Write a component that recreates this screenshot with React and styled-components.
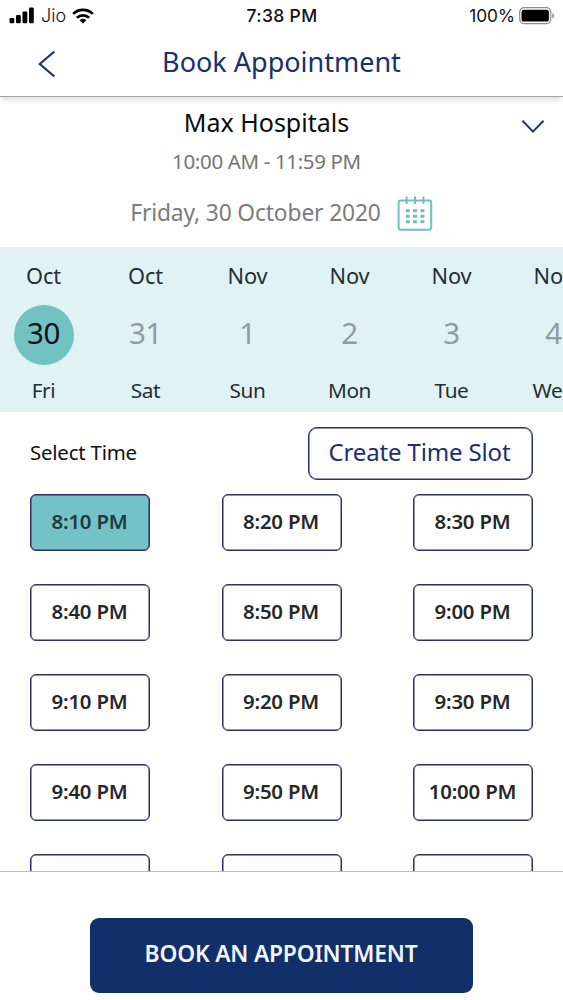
import React, { useState } from 'react';
import styled, { createGlobalStyle } from 'styled-components';

const days = [
    { month: 'Oct', date: 30, day: 'Fri' },
    { month: 'Oct', date: 31, day: 'Sat' },
    { month: 'Nov', date: 1, day: 'Sun' },
    { month: 'Nov', date: 2, day: 'Mon' },
    { month: 'Nov', date: 3, day: 'Tue' },
    { month: 'Nov', date: 4, day: 'Wed' },
];

const slots = [
    '8:10 PM', '8:20 PM', '8:30 PM',
    '8:40 PM', '8:50 PM', '9:00 PM',
    '9:10 PM', '9:20 PM', '9:30 PM',
    '9:40 PM', '9:50 PM', '10:00 PM',
    '10:10 PM', '10:20 PM', '10:30 PM',
];

function StatusBar() {
    return (
        <Status>
            <Carrier>
                <svg width="26" height="17" viewBox="0 0 26 17">
                    <rect x="0.5" y="11" width="4.8" height="5.3" rx="1.2" />
                    <rect x="7" y="8" width="4.8" height="8.3" rx="1.2" />
                    <rect x="13.5" y="4.5" width="4.8" height="11.8" rx="1.2" />
                    <rect x="20" y="0.6" width="4.8" height="15.7" rx="1.2" />
                </svg>
                <CarrierName>Jio</CarrierName>
                <svg width="22" height="16" viewBox="0 0 22 16">
                    <g fill="none" stroke="#000" strokeWidth="2.7">
                        <path d="M1.2 5.9a14 14 0 0 1 19.6 0" />
                        <path d="M4.9 9.8a8.7 8.7 0 0 1 12.2 0" />
                    </g>
                    <path d="M7.6 12.2a4.9 4.9 0 0 1 6.8 0L11 15.6z" />
                </svg>
            </Carrier>
            <Clock>7:38 PM</Clock>
            <Battery>
                100%
                <svg width="36" height="18" viewBox="0 0 36 18">
                    <rect x="0.7" y="0.7" width="31" height="16" rx="4.4" fill="none" stroke="#8d8d8d" strokeWidth="1.2" />
                    <rect x="2.5" y="2.8" width="27.4" height="11.8" rx="2.2" />
                    <path d="M33.4 6v5.6c1.1-.5 1.8-1.6 1.8-2.8s-.7-2.3-1.8-2.8z" fill="#8d8d8d" />
                </svg>
            </Battery>
        </Status>
    );
}

function CalendarIcon() {
    return (
        <svg width="36" height="36" viewBox="0 0 36 36" fill="none" stroke="#72bfc0">
            <rect x="1.6" y="4.4" width="32.6" height="29.4" rx="2" strokeWidth="2" />
            <path d="M9.6 0.5v7.6M18 0.5v7.6M26.4 0.5v7.6" strokeWidth="2" />
            <path d="M8.8 14.7h18.6M8.8 20.2h18.6M8.8 25.7h18.6" strokeWidth="3" strokeDasharray="4 3.3" />
        </svg>
    );
}

export default function App() {
    const [activeDay, setActiveDay] = useState(0);
    const [activeSlot, setActiveSlot] = useState(0);

    return (
        <Screen>
            <GlobalStyle />
            <StatusBar />
            <Header>
                <BackButton aria-label="Back">
                    <svg width="18" height="28" viewBox="0 0 18 28" fill="none" stroke="#1d3474" strokeWidth="2.2">
                        <path d="M16.4 1.5L1.8 14L16.4 26.5" />
                    </svg>
                </BackButton>
                <Title>Book Appointment</Title>
            </Header>
            <Hospital>
                <HospitalName>Max Hospitals</HospitalName>
                <Hours>10:00 AM - 11:59 PM</Hours>
                <Expand aria-label="Change hospital">
                    <svg width="24" height="15" viewBox="0 0 24 15" fill="none" stroke="#1d3474" strokeWidth="2">
                        <path d="M1.5 1.8L12 12.6L22.5 1.8" />
                    </svg>
                </Expand>
            </Hospital>
            <DateRow>
                <DateText>Friday, 30 October 2020</DateText>
                <CalendarIcon />
            </DateRow>
            <DayStrip>
                {days.map((d, i) => (
                    <Day key={d.date} onClick={() => setActiveDay(i)}>
                        <Month>{d.month}</Month>
                        <DateCircle $active={i === activeDay}>{d.date}</DateCircle>
                        <Weekday>{d.day}</Weekday>
                    </Day>
                ))}
            </DayStrip>
            <TimeSection>
                <TimeHeader>
                    <Label>Select Time</Label>
                    <CreateButton>Create Time Slot</CreateButton>
                </TimeHeader>
                <SlotGrid>
                    {slots.map((slot, i) => (
                        <Slot key={slot} $active={i === activeSlot} onClick={() => setActiveSlot(i)}>
                            {slot}
                        </Slot>
                    ))}
                </SlotGrid>
            </TimeSection>
            <Footer>
                <BookButton>BOOK AN APPOINTMENT</BookButton>
            </Footer>
        </Screen>
    );
}

const GlobalStyle = createGlobalStyle`
    * {
        box-sizing: border-box;
    }
    body {
        margin: 0;
        background: #fefefe;
    }
    button {
        margin: 0;
        padding: 0;
        border: 0;
        background: none;
        font-family: inherit;
        cursor: pointer;
    }
    svg {
        display: block;
        flex-shrink: 0;
    }
`;

const Screen = styled.div`
    display: flex;
    flex-direction: column;
    width: 563px;
    height: 1000px;
    overflow: hidden;
    background: #fefefe;
    color: #111;
    font-family: 'Noto Sans', 'Open Sans', sans-serif;
    white-space: nowrap;
`;

const Status = styled.div`
    display: grid;
    grid-template-columns: 1fr auto 1fr;
    align-items: center;
    flex-shrink: 0;
    height: 31px;
    padding: 0 8px 0 9px;
    font-family: Inter, 'Liberation Sans', sans-serif;
    font-size: 17px;
    color: #111;
`;

const Carrier = styled.div`
    display: flex;
    align-items: center;
`;

const CarrierName = styled.span`
    margin: 0 6px 0 6px;
    font-weight: 300;
    font-size: 18px;
`;

const Clock = styled.div`
    font-weight: 500;
    font-size: 17.5px;
    letter-spacing: 0.35px;
`;

const Battery = styled.div`
    display: flex;
    align-items: center;
    justify-content: flex-end;
    gap: 4px;
    font-size: 17.3px;
`;

const Header = styled.header`
    display: grid;
    grid-template-columns: 94px 1fr 94px;
    align-items: center;
    flex-shrink: 0;
    height: 66px;
    border-bottom: 1px solid #a3a5aa;
    box-shadow: 0 5px 5px -2px rgba(40, 60, 80, 0.16);
`;

const BackButton = styled.button`
    justify-self: center;
    margin-right: 1px;
`;

const Title = styled.h1`
    margin: 0;
    padding-bottom: 3px;
    text-align: center;
    font-size: 27px;
    line-height: 36px;
    font-weight: 400;
    color: #1b2f6d;
`;

const Hospital = styled.section`
    display: grid;
    grid-template-columns: 502px 24px;
    flex-shrink: 0;
    padding: 8px 0 0 15px;
    text-align: center;
`;

const HospitalName = styled.h2`
    margin: 0 0 0 15px;
    padding-right: 14px;
    line-height: 35px;
    font-size: 25px;
    font-weight: 400;
    color: #0c0c0c;
`;

const Hours = styled.div`
    grid-row: 2;
    margin-top: 8px;
    padding-left: 1px;
    line-height: 27px;
    font-size: 20.5px;
    letter-spacing: -0.35px;
    color: #757575;
`;

const Expand = styled.button`
    grid-column: 2;
    grid-row: 1;
    align-self: center;
    margin: 7px 0 0 4px;
`;

const DateRow = styled.div`
    display: flex;
    align-items: center;
    justify-content: center;
    gap: 16px;
    flex-shrink: 0;
    height: 72px;
    padding-top: 6px;
`;

const DateText = styled.span`
    padding-bottom: 3px;
    font-size: 22.8px;
    letter-spacing: -0.15px;
    color: #7c7c7c;
`;

const DayStrip = styled.div`
    display: flex;
    flex-shrink: 0;
    height: 165px;
    padding-top: 14px;
    overflow: hidden;
    background: #e1f2f4;
`;

const Day = styled.div`
    display: flex;
    flex-direction: column;
    align-items: center;
    flex: 0 0 102px;
    color: #252f33;

    &:first-child {
        margin-left: -7.5px;
    }
`;

const Month = styled.span`
    line-height: 30px;
    font-size: 21.8px;
    letter-spacing: -0.1px;
`;

const DateCircle = styled.span`
    width: 60px;
    height: 60px;
    margin: 14px 0 12px;
    border-radius: 50%;
    line-height: 55px;
    text-align: center;
    font-size: 29.5px;
    letter-spacing: -0.3px;
    background: ${({ $active }) => ($active ? '#73c2c3' : 'transparent')};
    color: ${({ $active }) => ($active ? '#071318' : '#929b9e')};
`;

const Weekday = styled.span`
    line-height: 26px;
    font-size: 20.8px;
    letter-spacing: -0.4px;
`;

const TimeSection = styled.section`
    flex: 1;
    min-height: 0;
    overflow: hidden;
    padding: 15px 30px 0;
`;

const TimeHeader = styled.div`
    display: flex;
    align-items: center;
    justify-content: space-between;
    height: 53px;
`;

const Label = styled.span`
    padding-bottom: 4px;
    font-size: 20.4px;
    letter-spacing: -0.2px;
`;

const CreateButton = styled.button`
    width: 225px;
    height: 53px;
    padding: 0 2px 4px 0;
    border: 1px solid #302d66;
    border-radius: 9px;
    box-shadow: inset 0 0 0 0.5px #302d66;
    font-size: 24px;
    letter-spacing: -0.15px;
    color: #1b2f6d;
`;

const SlotGrid = styled.div`
    display: grid;
    grid-template-columns: repeat(3, 120px);
    justify-content: space-between;
    grid-auto-rows: 57px;
    row-gap: 33px;
    margin-top: 14px;
`;

const Slot = styled.button`
    padding: 0 1px 3px 0;
    border: 1px solid #302d66;
    border-radius: 6px;
    box-shadow: inset 0 0 0 0.5px #302d66;
    font-size: 20.4px;
    font-weight: 600;
    letter-spacing: -0.2px;
    background: ${({ $active }) => ($active ? '#73c2c6' : 'transparent')};
    color: ${({ $active }) => ($active ? '#203a40' : '#272727')};
`;

const Footer = styled.footer`
    display: flex;
    justify-content: center;
    flex-shrink: 0;
    height: 129px;
    padding-top: 46px;
    border-top: 1px solid #bdbdc3;
`;

const BookButton = styled.button`
    width: 383px;
    height: 75px;
    padding: 0 1px 4px 0;
    border-radius: 9px;
    font-size: 22.8px;
    font-weight: 600;
    letter-spacing: -0.2px;
    background: #112f69;
    color: #f1f6ff;
`;
